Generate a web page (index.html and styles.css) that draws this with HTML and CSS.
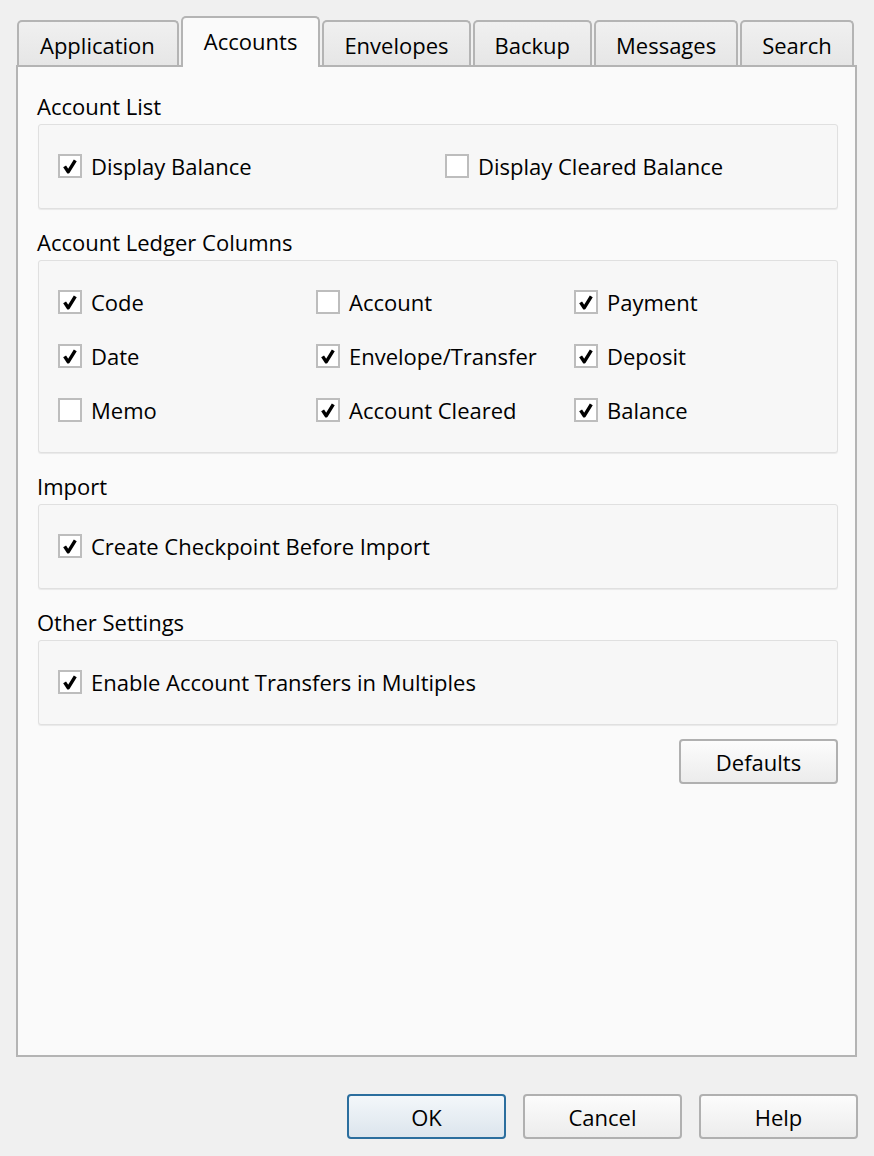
FILE: index.html
```html
<!DOCTYPE html>
<html lang="en">

<head>
    <meta charset="UTF-8">
    <meta name="viewport" content="width=device-width, initial-scale=1.0">
    <title>Preferences</title>
    <link rel="stylesheet" href="styles.css">
</head>

<body>
    <div class="dialog">
        <div class="tabs">
            <div class="tab">Application</div>
            <div class="tab active">Accounts</div>
            <div class="tab">Envelopes</div>
            <div class="tab">Backup</div>
            <div class="tab">Messages</div>
            <div class="tab">Search</div>
        </div>

        <div class="panel">
            <h2 class="group-title">Account List</h2>
            <div class="group list-grid">
                <label class="check"><span class="box on"></span>Display Balance</label>
                <label class="check"><span class="box"></span>Display Cleared Balance</label>
            </div>

            <h2 class="group-title">Account Ledger Columns</h2>
            <div class="group ledger-grid">
                <label class="check"><span class="box on"></span>Code</label>
                <label class="check"><span class="box"></span>Account</label>
                <label class="check"><span class="box on"></span>Payment</label>
                <label class="check"><span class="box on"></span>Date</label>
                <label class="check"><span class="box on"></span>Envelope/Transfer</label>
                <label class="check"><span class="box on"></span>Deposit</label>
                <label class="check"><span class="box"></span>Memo</label>
                <label class="check"><span class="box on"></span>Account Cleared</label>
                <label class="check"><span class="box on"></span>Balance</label>
            </div>

            <h2 class="group-title">Import</h2>
            <div class="group">
                <label class="check"><span class="box on"></span>Create Checkpoint Before Import</label>
            </div>

            <h2 class="group-title">Other Settings</h2>
            <div class="group">
                <label class="check"><span class="box on"></span>Enable Account Transfers in Multiples</label>
            </div>

            <div class="panel-actions">
                <button class="btn">Defaults</button>
            </div>
        </div>

        <div class="dialog-actions">
            <button class="btn primary">OK</button>
            <button class="btn">Cancel</button>
            <button class="btn">Help</button>
        </div>
    </div>
</body>
</html>
```

FILE: styles.css
```css
:root {
    --bg-color: #f0f0f0;
    --panel-bg: #fafafa;
    --group-bg: #f7f7f7;
    --text-color: #000000;
    --border: #b4b4b4;
    --box-border: #bdbdbd;
    --accent: #2b6e9e;
}

* {
    margin: 0;
    padding: 0;
    box-sizing: border-box;
}

body {
    font-family: 'Open Sans', 'Noto Sans', sans-serif;
    font-size: 22px;
    color: var(--text-color);
    background-color: var(--bg-color);
}

.dialog {
    width: 874px;
    height: 1156px;
    padding: 16px 17px 0 16px;
}

/* tab strip */
.tabs {
    display: flex;
    align-items: flex-end;
    gap: 2px;
    padding-left: 1px;
}

.tab {
    height: 45px;
    padding: 6px 20px 0;
    line-height: 34px;
    border: 2px solid var(--border);
    border-bottom: none;
    border-radius: 5px 5px 0 0;
    background: linear-gradient(#f0f0f0, #e6e6e6);
}

.tab:first-child {
    padding: 6px 22px 0 21px;
}

.tab.active {
    height: 51px;
    padding: 6px 21px 0;
    margin-bottom: -2px;
    background: var(--panel-bg);
    position: relative;
    z-index: 1;
}

/* page */
.panel {
    height: 992px;
    border: 2px solid var(--border);
    background-color: var(--panel-bg);
    padding: 24px 17px 0 20px;
}

.group-title {
    font-size: 22px;
    font-weight: normal;
    line-height: 30px;
    margin-left: -1px;
}

.group {
    margin: 3px 0 18px;
    padding: 26px 20px 27px;
    border: 1px solid #e0e0e0;
    border-radius: 3px;
    background-color: var(--group-bg);
    box-shadow: 0 1px 1px rgba(0, 0, 0, 0.07);
}

.list-grid {
    display: grid;
    grid-template-columns: 387px 1fr;
}

.ledger-grid {
    display: grid;
    grid-template-columns: 258px 258px 1fr;
    row-gap: 24px;
}

.check {
    display: flex;
    align-items: center;
    gap: 9px;
    line-height: 30px;
    white-space: nowrap;
}

.box {
    width: 24px;
    height: 24px;
    margin-left: -1px;
    border: 2px solid var(--box-border);
    background: #ffffff;
    flex-shrink: 0;
}

.box.on {
    background: #ffffff url("data:image/svg+xml,%3Csvg xmlns='http://www.w3.org/2000/svg' viewBox='0 0 20 20'%3E%3Cpath d='M4.6 10.4 L8.2 15.8 L15.3 4.4' fill='none' stroke='%23000' stroke-width='3.4' stroke-linejoin='round'/%3E%3C/svg%3E") center / 20px 20px no-repeat;
}

/* buttons */
.btn {
    font-family: inherit;
    font-size: 22px;
    color: var(--text-color);
    width: 159px;
    height: 45px;
    border: 2px solid #b0b0b0;
    border-radius: 4px;
    background: linear-gradient(#fcfcfc, #ececec);
    cursor: pointer;
}

.btn.primary {
    border-color: var(--accent);
    background: linear-gradient(#f3f7fa, #dce5ed);
}

.panel-actions {
    display: flex;
    justify-content: flex-end;
    margin-top: -4px;
}

.dialog-actions {
    display: flex;
    justify-content: flex-end;
    gap: 17px;
    margin: 37px -1px 0 0;
}
```
